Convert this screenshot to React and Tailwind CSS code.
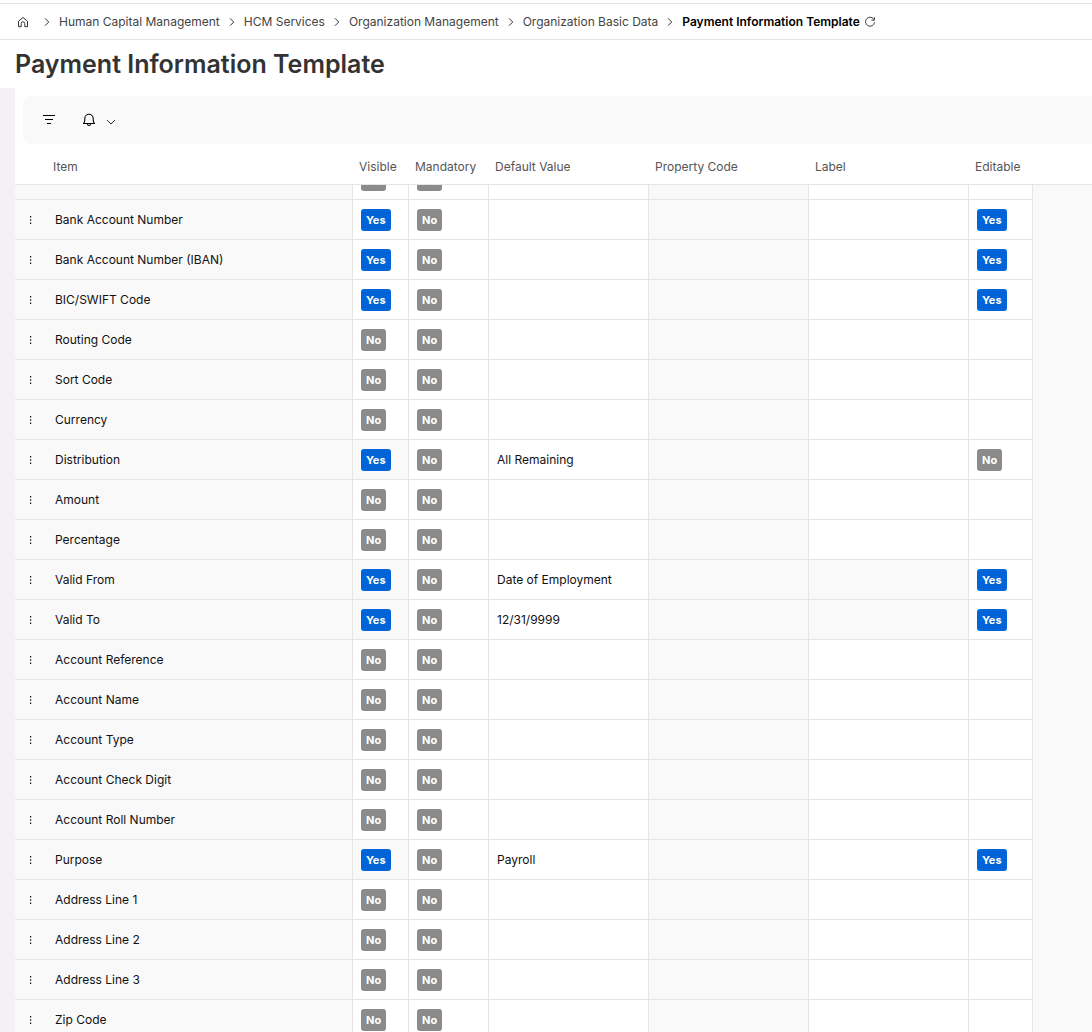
import React, { useEffect, useRef } from "react";

const crumbs = [
  "Human Capital Management",
  "HCM Services",
  "Organization Management",
  "Organization Basic Data",
];

const rows = [
  { item: "", visible: false },
  { item: "Bank Account Number", visible: true, editable: true },
  { item: "Bank Account Number (IBAN)", visible: true, editable: true },
  { item: "BIC/SWIFT Code", visible: true, editable: true },
  { item: "Routing Code", visible: false },
  { item: "Sort Code", visible: false },
  { item: "Currency", visible: false },
  { item: "Distribution", visible: true, value: "All Remaining", editable: false, locked: true },
  { item: "Amount", visible: false },
  { item: "Percentage", visible: false },
  { item: "Valid From", visible: true, value: "Date of Employment", editable: true, locked: true, labelLocked: true },
  { item: "Valid To", visible: true, value: "12/31/9999", editable: true, locked: true, labelLocked: true },
  { item: "Account Reference", visible: false },
  { item: "Account Name", visible: false },
  { item: "Account Type", visible: false },
  { item: "Account Check Digit", visible: false },
  { item: "Account Roll Number", visible: false },
  { item: "Purpose", visible: true, value: "Payroll", editable: true, locked: true },
  { item: "Address Line 1", visible: false },
  { item: "Address Line 2", visible: false },
  { item: "Address Line 3", visible: false },
  { item: "Zip Code", visible: false },
];

const Chevron = () => (
  <svg className="mx-1.5 h-3 w-3 shrink-0" viewBox="0 0 12 12" fill="none" stroke="#333" strokeWidth="1">
    <path d="M4 2.300 7.700 6 4 9.700" />
  </svg>
);

const HomeIcon = () => (
  <svg className="h-3 w-3" viewBox="0 0 12 12" fill="none" stroke="#333" strokeWidth="1">
    <path d="M1.500 5.200 6 1.500l4.500 3.700v5.500H7.800V7.600a1.800 1.800 0 0 0-3.600 0v3.100H1.500Z" strokeLinejoin="round" />
  </svg>
);

const RefreshIcon = () => (
  <svg className="h-3 w-3" viewBox="0 0 12 12" fill="none" stroke="#444" strokeWidth="1">
    <path d="M10.200 4A4.500 4.500 0 1 0 10.500 6.300M10.400 1.200V4.200H7.400" />
  </svg>
);

const Badge = ({ on }) => (
  <span
    className={`flex h-[22px] w-fit items-center rounded-[3px] px-[5px] pt-0.5 text-[11px] font-bold text-white ${
      on ? "bg-[#0064d9]" : "bg-[#8b8b8b]"
    }`}
  >
    {on ? "Yes" : "No"}
  </span>
);

const Th = ({ children }) => (
  <th className="sticky top-0 z-10 h-[41px] border-b border-[#e5e5e5] bg-white px-1.5 pt-1.5 text-left font-normal whitespace-nowrap">
    {children}
  </th>
);

const Td = ({ children, muted }) => (
  <td className={`h-10 border-r border-b border-[#e5e5e5] px-2 whitespace-nowrap ${muted ? "bg-[#f9f9f9]" : "bg-white"}`}>
    {children}
  </td>
);

const App = () => {
  const scroller = useRef(null);

  useEffect(() => {
    scroller.current.scrollTop = 25;
  }, []);

  return (
    <div className="flex h-screen flex-col overflow-hidden bg-white font-['Inter',sans-serif] text-xs text-[#111]">
      <nav aria-label="Breadcrumb" className="mt-[3px] flex h-[37px] shrink-0 items-center border-y border-[#e5e5e5] px-[17px] text-[#444]">
        <a href="#" aria-label="Home" className="mr-1.5">
          <HomeIcon />
        </a>
        {crumbs.map((crumb) => (
          <React.Fragment key={crumb}>
            <Chevron />
            <a href="#" className="whitespace-nowrap">{crumb}</a>
          </React.Fragment>
        ))}
        <Chevron />
        <span className="font-semibold whitespace-nowrap text-black">Payment Information Template</span>
        <button type="button" aria-label="Refresh" className="ml-1">
          <RefreshIcon />
        </button>
      </nav>

      <h1 className="flex h-12 shrink-0 items-center px-[15px] pt-0.5 text-[25px] font-semibold text-[#333]">
        Payment Information Template
      </h1>

      <main className="flex min-h-0 flex-1 flex-col border-l-[15px] border-[#f3f1f4]">
        <div className="mt-2 ml-2 flex h-12 shrink-0 items-center rounded-l-lg bg-[#f9f9f9] pl-[18px]">
          <button type="button" aria-label="Filter" className="mr-6">
            <svg className="h-4 w-4" viewBox="0 0 16 16" fill="none" stroke="#000" strokeWidth="1.1">
              <path d="M2 3.500h12M4 7.500h8M6 11.500h4" />
            </svg>
          </button>
          <button type="button" aria-label="Notifications" className="flex items-center gap-2">
            <svg className="h-4 w-4" viewBox="0 0 16 16" fill="none" stroke="#000" strokeWidth="1.100">
              <path d="M2.500 11.500c1-.8 1.300-2 1.300-3.500V6.500a4.200 4.200 0 0 1 8.400 0V8c0 1.500.3 2.700 1.300 3.500Z" strokeLinejoin="round" />
              <path d="M6.500 12a1.500 1.500 0 0 0 3 0" />
            </svg>
            <svg className="mt-1 h-3 w-3" viewBox="0 0 12 12" fill="none" stroke="#333" strokeWidth="1">
              <path d="M2 4 6 8l4-4" />
            </svg>
          </button>
        </div>

        <div ref={scroller} className="min-h-0 flex-1 overflow-auto bg-[#f9f9f9] [scrollbar-width:none]">
          <table className="w-full table-fixed border-separate border-spacing-0">
            <colgroup>
              <col className="w-8" />
              <col className="w-[306px]" />
              <col className="w-14" />
              <col className="w-20" />
              <col className="w-40" />
              <col className="w-40" />
              <col className="w-40" />
              <col className="w-16" />
              <col />
            </colgroup>
            <thead className="text-[#555]">
              <tr>
                <Th />
                <Th>Item</Th>
                <Th>Visible</Th>
                <Th>Mandatory</Th>
                <Th>Default Value</Th>
                <Th>Property Code</Th>
                <Th>Label</Th>
                <Th>Editable</Th>
                <Th />
              </tr>
            </thead>
            <tbody>
              {rows.map((row) => (
                <tr key={row.item}>
                  <td className="border-b border-[#e5e5e5]">
                    <button type="button" aria-label="Row actions" className="block pl-3">
                      <svg className="h-2 w-2" viewBox="0 0 8 8" fill="#111">
                        <path d="M3 0h1.200v1.500H3zM3 3.200h1.200v1.500H3zM3 6.400h1.200V7.900H3z" />
                      </svg>
                    </button>
                  </td>
                  <Td muted>{row.item}</Td>
                  <Td muted={row.locked}>
                    <Badge on={row.visible} />
                  </Td>
                  <Td>
                    <Badge on={false} />
                  </Td>
                  <Td>{row.value}</Td>
                  <Td muted />
                  <Td muted={row.labelLocked} />
                  <Td>{row.editable !== undefined && <Badge on={row.editable} />}</Td>
                  <td />
                </tr>
              ))}
            </tbody>
          </table>
        </div>
      </main>
    </div>
  );
};

export default App;
